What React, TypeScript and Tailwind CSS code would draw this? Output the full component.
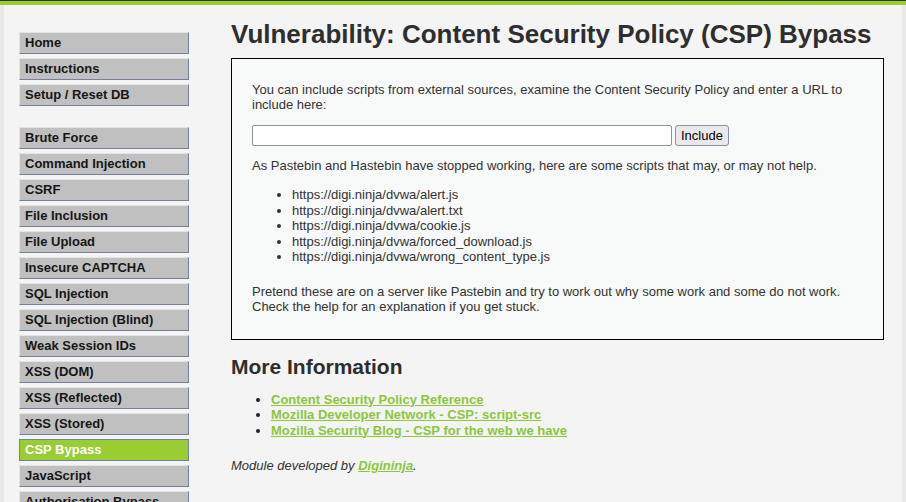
import React from 'react';

const groupA = ['Home', 'Instructions', 'Setup / Reset DB'];
const groupB = [
  'Brute Force',
  'Command Injection',
  'CSRF',
  'File Inclusion',
  'File Upload',
  'Insecure CAPTCHA',
  'SQL Injection',
  'SQL Injection (Blind)',
  'Weak Session IDs',
  'XSS (DOM)',
  'XSS (Reflected)',
  'XSS (Stored)',
  'CSP Bypass',
  'JavaScript',
  'Authorisation Bypass',
];

const scripts = [
  'https://digi.ninja/dvwa/alert.js',
  'https://digi.ninja/dvwa/alert.txt',
  'https://digi.ninja/dvwa/cookie.js',
  'https://digi.ninja/dvwa/forced_download.js',
  'https://digi.ninja/dvwa/wrong_content_type.js',
];

const refs = [
  'Content Security Policy Reference',
  'Mozilla Developer Network - CSP: script-src',
  'Mozilla Security Blog - CSP for the web we have',
];

const MenuItem: React.FC<{ label: string }> = ({ label }) => {
  const active = label === 'CSP Bypass';
  return (
    <li>
      <a
        href="#"
        className={`flex items-center h-[22px] pl-[5px] text-[13px] font-bold mb-[4px] border ${
          active
            ? 'bg-[#9acd32] text-white border-[#7080a8]'
            : 'bg-[#c0c0c0] text-[#161616] border-t-[#e4e4e4] border-l-[#e4e4e4] border-r-[#72809c] border-b-[#72809c]'
        }`}
      >
        {label}
      </a>
    </li>
  );
};

export default function App() {
  return (
    <div
      className="h-[502px] overflow-hidden bg-[#e8e8e8] text-[#222]"
      style={{ fontFamily: '"Liberation Sans", Arial, sans-serif' }}
    >
      <div className="h-px bg-[#333]" />
      <div className="h-[4px] bg-[#9acd32]" />
      <div className="mx-[4px] bg-[#f4f4f4] flex h-full">
        <ul className="w-[170px] ml-[15px] mt-[27px] shrink-0">
          {groupA.map((l) => (
            <MenuItem key={l} label={l} />
          ))}
          <li className="h-[17px]" />
          {groupB.map((l) => (
            <MenuItem key={l} label={l} />
          ))}
        </ul>
        <div className="ml-[42px] w-[653px]">
          <h1 className="text-[26px] font-bold text-[#2e2e2e] mt-[14px] leading-[30px]">
            Vulnerability: Content Security Policy (CSP) Bypass
          </h1>
          <div className="mt-[9px] border border-black bg-[#f8f9f9] px-[20px] pt-[23px] pb-[25px] text-[13px] leading-[15px] text-[#333]">
            <p>
              You can include scripts from external sources, examine the Content Security Policy and enter a URL to
              include here:
            </p>
            <form className="flex items-center mt-[13px]">
              <input
                type="text"
                className="w-[420px] h-[21px] border border-[#8f8f9d] rounded-[2px] bg-white"
              />
              <button
                type="button"
                className="ml-[3px] h-[21px] px-[5px] border border-[#8f8f9d] rounded-[3px] bg-[#e9e9ed] text-[13px] text-black"
              >
                Include
              </button>
            </form>
            <p className="mt-[12px]">
              As Pastebin and Hastebin have stopped working, here are some scripts that may, or may not help.
            </p>
            <ul className="mt-[14px] ml-[40px] list-disc leading-[15.5px]">
              {scripts.map((s) => (
                <li key={s}>{s}</li>
              ))}
            </ul>
            <p className="mt-[19px]">
              Pretend these are on a server like Pastebin and try to work out why some work and some do not work.
              <br />
              Check the help for an explanation if you get stuck.
            </p>
          </div>
          <h2 className="mt-[14px] text-[21px] font-bold text-[#2e2e2e] leading-[26px]">More Information</h2>
          <ul className="mt-[12px] ml-[40px] list-disc text-[13px] leading-[15.5px] font-bold">
            {refs.map((r) => (
              <li key={r}>
                <a href="#" className="text-[#8cc63f] underline">
                  {r}
                </a>
              </li>
            ))}
          </ul>
          <p className="mt-[18px] text-[13px] italic text-[#333]">
            Module developed by{' '}
            <a href="#" className="text-[#8cc63f] underline font-bold">
              Digininja
            </a>
            .
          </p>
        </div>
      </div>
    </div>
  );
}
